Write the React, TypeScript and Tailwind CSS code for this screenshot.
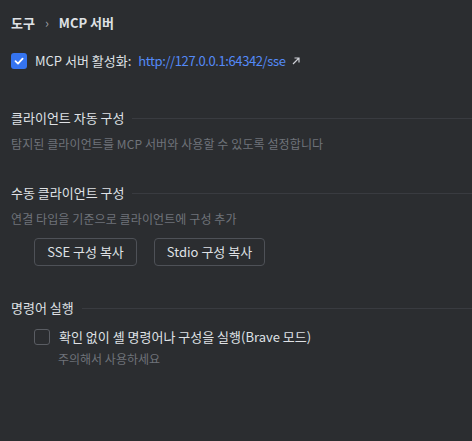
import React, { useState } from "react";

const font = { fontFamily: '"Noto Sans CJK KR", "Noto Sans", sans-serif' };

const SectionTitle = ({ title }: { title: string }) => (
  <div className="flex items-center gap-2 h-5">
    <span className="text-[13px] leading-5 text-[#dfe1e5] whitespace-nowrap">{title}</span>
    <div className="flex-1 h-px bg-[#393b40]" />
  </div>
);

const Check = ({ checked, onClick }: { checked: boolean; onClick: () => void }) =>
  checked ? (
    <button
      onClick={onClick}
      className="w-4 h-4 rounded-[3px] bg-[#3574f0] flex items-center justify-center shrink-0"
    >
      <svg width="12" height="12" viewBox="0 0 12 12" fill="none">
        <path d="M2.5 6.2 L5 8.6 L9.6 3.6" stroke="#fff" strokeWidth="1.8" strokeLinecap="round" strokeLinejoin="round" />
      </svg>
    </button>
  ) : (
    <button
      onClick={onClick}
      className="w-4 h-4 rounded-[3px] border border-[#5a5d63] bg-[#2b2d30] shrink-0"
    />
  );

export default function App() {
  const [enabled, setEnabled] = useState(true);
  const [brave, setBrave] = useState(false);

  return (
    <div className="w-[472px] h-[441px] bg-[#2b2d30] overflow-hidden" style={font}>
      <div className="pl-[11px] pt-[14px]">
        {/* breadcrumb */}
        <div className="flex items-center h-[18px] text-[13px] leading-[18px] font-semibold text-[#dfe1e5]">
          <span>도구</span>
          <span className="mx-[10px] text-[#9a9da3] font-normal text-[13px]">›</span>
          <span>MCP 서버</span>
        </div>

        {/* enable */}
        <div className="flex items-center mt-[21px] h-4 leading-4">
          <Check checked={enabled} onClick={() => setEnabled(!enabled)} />
          <span className="ml-[8px] text-[13px] text-[#dfe1e5]">MCP 서버 활성화:</span>
          <span className="ml-[7px] text-[13px] tracking-[-0.4px] text-[#548af7]">http://127.0.0.1:64342/sse</span>
          <svg className="ml-[5px]" width="10" height="10" viewBox="0 0 10 10" fill="none">
            <path d="M2 8 L8 2 M3.5 2 H8 V6.5" stroke="#ced0d6" strokeWidth="1.2" />
          </svg>
        </div>

        {/* auto config */}
        <div className="mt-[39px]">
          <SectionTitle title="클라이언트 자동 구성" />
          <div className="mt-[8px] text-[12px] leading-4 tracking-[0.1px] text-[#6f737a]">
            탐지된 클라이언트를 MCP 서버와 사용할 수 있도록 설정합니다
          </div>
        </div>

        {/* manual config */}
        <div className="mt-[31px]">
          <SectionTitle title="수동 클라이언트 구성" />
          <div className="mt-[8px] text-[12px] leading-4 tracking-[0.1px] text-[#6f737a]">
            연결 타입을 기준으로 클라이언트에 구성 추가
          </div>
          <div className="flex gap-[17px] mt-[11px] ml-[23px]">
            <button className="h-[28px] w-[103px] rounded-[4px] border border-[#4e5157] text-[13px] text-[#dfe1e5]">
              SSE 구성 복사
            </button>
            <button className="h-[28px] w-[111px] rounded-[4px] border border-[#4e5157] text-[13px] text-[#dfe1e5]">
              Stdio 구성 복사
            </button>
          </div>
        </div>

        {/* commands */}
        <div className="mt-[32px]">
          <SectionTitle title="명령어 실행" />
          <div className="flex items-center mt-[11px] ml-[23px] h-4 leading-4">
            <Check checked={brave} onClick={() => setBrave(!brave)} />
            <span className="ml-[9px] text-[13px] text-[#dfe1e5]">
              확인 없이 셸 명령어나 구성을 실행(Brave 모드)
            </span>
          </div>
          <div className="ml-[47px] mt-[6px] text-[12px] leading-4 text-[#6f737a]">주의해서 사용하세요</div>
        </div>
      </div>
    </div>
  );
}
